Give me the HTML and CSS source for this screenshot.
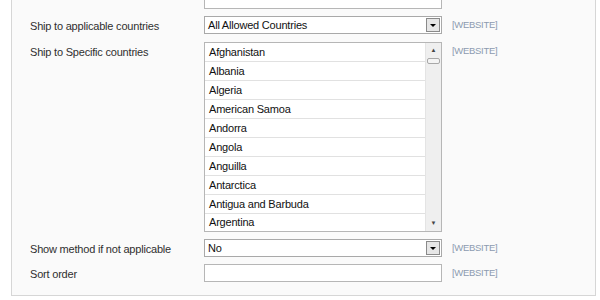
FILE: index.html
```html
<!DOCTYPE html>
<html lang="en">

<head>
    <meta charset="UTF-8">
    <title>Shipping method settings</title>
    <link rel="stylesheet" href="styles.css">
</head>

<body>
<div class="panel">
    <div class="form-row">
        <span class="row-label"></span>
        <div class="text-input"></div>
        <span class="scope"></span>
    </div>
    <div class="form-row">
        <span class="row-label">Ship to applicable countries</span>
        <div class="select-box">
            <span class="select-value">All Allowed Countries</span>
            <span class="select-button"><span class="arrow-down"></span></span>
        </div>
        <span class="scope">[WEBSITE]</span>
    </div>
    <div class="form-row list-row">
        <span class="row-label">Ship to Specific countries</span>
        <div class="list-box">
            <ul class="country-list">
                <li>Afghanistan</li>
                <li>Albania</li>
                <li>Algeria</li>
                <li>American Samoa</li>
                <li>Andorra</li>
                <li>Angola</li>
                <li>Anguilla</li>
                <li>Antarctica</li>
                <li>Antigua and Barbuda</li>
                <li>Argentina</li>
            </ul>
            <div class="scroll-track">
                <span class="scroll-arrow">&#9650;</span>
                <span class="scroll-thumb"></span>
                <span class="scroll-space"></span>
                <span class="scroll-arrow">&#9660;</span>
            </div>
        </div>
        <span class="scope">[WEBSITE]</span>
    </div>
    <div class="form-row">
        <span class="row-label">Show method if not applicable</span>
        <div class="select-box">
            <span class="select-value">No</span>
            <span class="select-button"><span class="arrow-down"></span></span>
        </div>
        <span class="scope">[WEBSITE]</span>
    </div>
    <div class="form-row">
        <span class="row-label">Sort order</span>
        <div class="text-input"></div>
        <span class="scope">[WEBSITE]</span>
    </div>
</div>
</body>

</html>
```

FILE: styles.css
```css
body {
    margin: 0;
    background-color: #ffffff;
    font-family: "Liberation Sans", Arial, sans-serif;
    font-size: 11px;
    color: #2f2f2f;
}

.panel {
    margin: -10px 4px 0 11px;
    padding: 0 18px 13px 18px;
    background-color: #fafafa;
    border: 1px solid #d6d6d6;
    box-shadow: 0 1px 0 #ececec;
    display: flex;
    flex-direction: column;
    gap: 7px;
}

.form-row {
    display: grid;
    grid-template-columns: 164px 238px auto;
    column-gap: 10px;
    align-items: start;
}

.list-row {
    margin-top: 1px;
}

.row-label {
    padding-top: 3px;
    line-height: 14px;
    letter-spacing: -0.2px;
}

.scope {
    padding-top: 2px;
    line-height: 14px;
    font-size: 9.5px;
    letter-spacing: -0.3px;
    color: #8c9ab0;
}

.text-input {
    height: 16px;
    background-color: #ffffff;
    border: 1px solid #b6b6b6;
}

.select-box {
    height: 16px;
    display: flex;
    align-items: center;
    background-color: #ffffff;
    border: 1px solid #a9a9a9;
}

.select-value {
    flex: 1;
    padding-left: 3px;
    color: #111;
    letter-spacing: -0.2px;
}

.select-button {
    width: 12px;
    height: 12px;
    margin-right: 1px;
    display: flex;
    align-items: center;
    justify-content: center;
    background-color: #e6e6e6;
    border: 1px solid #8a8a8a;
}

.arrow-down {
    width: 0;
    height: 0;
    margin-top: 1px;
    border-left: 3px solid transparent;
    border-right: 3px solid transparent;
    border-top: 3px solid #000;
}

.list-box {
    height: 188px;
    display: flex;
    background-color: #ffffff;
    border: 1px solid #b6b6b6;
    overflow: hidden;
}

.country-list {
    flex: 1;
    margin: 0;
    padding: 0;
    list-style: none;
}

.country-list li {
    height: 18px;
    line-height: 18px;
    padding-left: 4px;
    color: #111;
    letter-spacing: -0.2px;
    border-bottom: 1px solid #e1e1e1;
}

.country-list li:last-child {
    height: 17px;
    line-height: 16px;
    border-bottom: none;
}

.scroll-track {
    width: 15px;
    display: flex;
    flex-direction: column;
    align-items: center;
    background-color: #efefef;
    border-left: 1px solid #e4e4e4;
}

.scroll-arrow {
    height: 15px;
    line-height: 15px;
    font-size: 6px;
    color: #444;
}

.scroll-thumb {
    width: 11px;
    height: 4px;
    border: 1px solid #a8a8a8;
    border-radius: 2px;
    background-color: #f4f4f4;
}

.scroll-space {
    flex: 1;
}
```
